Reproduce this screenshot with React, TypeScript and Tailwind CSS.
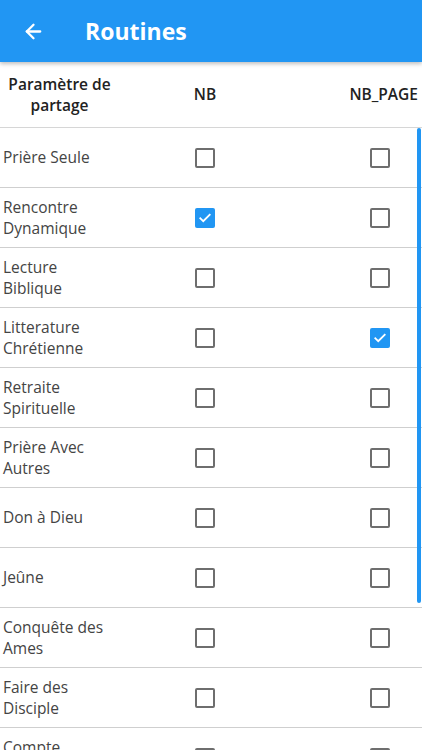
import { ArrowLeft } from 'lucide-react';

const routines = [
  { label: 'Prière Seule', nb: false, page: false },
  { label: 'Rencontre Dynamique', nb: true, page: false },
  { label: 'Lecture Biblique', nb: false, page: false },
  { label: 'Litterature Chrétienne', nb: false, page: true },
  { label: 'Retraite Spirituelle', nb: false, page: false },
  { label: 'Prière Avec Autres', nb: false, page: false },
  { label: 'Don à Dieu', nb: false, page: false },
  { label: 'Jeûne', nb: false, page: false },
  { label: 'Conquête des Ames', nb: false, page: false },
  { label: 'Faire des Disciple', nb: false, page: false },
  { label: 'Compte Rendu', nb: false, page: false },
];

function Box({ checked }: { checked: boolean }) {
  if (checked) {
    return (
      <div className="w-[20px] h-[20px] rounded-[2px] bg-[#2196f3] flex items-center justify-center">
        <svg width="14" height="14" viewBox="0 0 24 24" fill="none" stroke="white" strokeWidth="3.2" strokeLinecap="square">
          <path d="M4 12.5l5 5L20 6.5" />
        </svg>
      </div>
    );
  }
  return <div className="w-[20px] h-[20px] rounded-[2px] border-2 border-[#6e6e6e]" />;
}

export default function App() {
  return (
    <div className="relative w-[422px] h-[750px] overflow-hidden bg-white font-['Open_Sans',sans-serif]">
      {/* App bar */}
      <div className="relative z-10 h-[62px] bg-[#2196f3] flex items-center shadow-[0_2px_4px_rgba(0,0,0,0.25)]">
        <ArrowLeft className="ml-[22px] w-[23px] h-[23px] text-white" strokeWidth={2.4} />
        <h1 className="ml-[40px] text-white text-[23px] font-bold">Routines</h1>
      </div>

      {/* Table header */}
      <div className="grid grid-cols-[117px_176px_1fr] h-[66px] items-center border-b border-[#d6d6d6] text-[15.5px] font-semibold text-[#222]">
        <div className="text-center leading-[21px] pl-[2px] whitespace-nowrap">Paramètre de<br />partage</div>
        <div className="text-center">NB</div>
        <div className="text-right pr-[4px]">NB_PAGE</div>
      </div>

      {/* Rows */}
      {routines.map(r => (
        <div
          key={r.label}
          className="grid grid-cols-[117px_176px_1fr] h-[60px] items-center border-b border-[#cfcfcf]"
        >
          <div className="pl-[3px] pr-[9px] text-[15.5px] leading-[21px] text-[#444]">{r.label}</div>
          <div className="flex justify-center">
            <Box checked={r.nb} />
          </div>
          <div className="flex justify-end pr-[32px]">
            <Box checked={r.page} />
          </div>
        </div>
      ))}

      {/* Scrollbar */}
      <div className="absolute right-[1px] top-[128px] w-[4px] h-[475px] rounded-full bg-[#2196f3]" />
    </div>
  );
}
